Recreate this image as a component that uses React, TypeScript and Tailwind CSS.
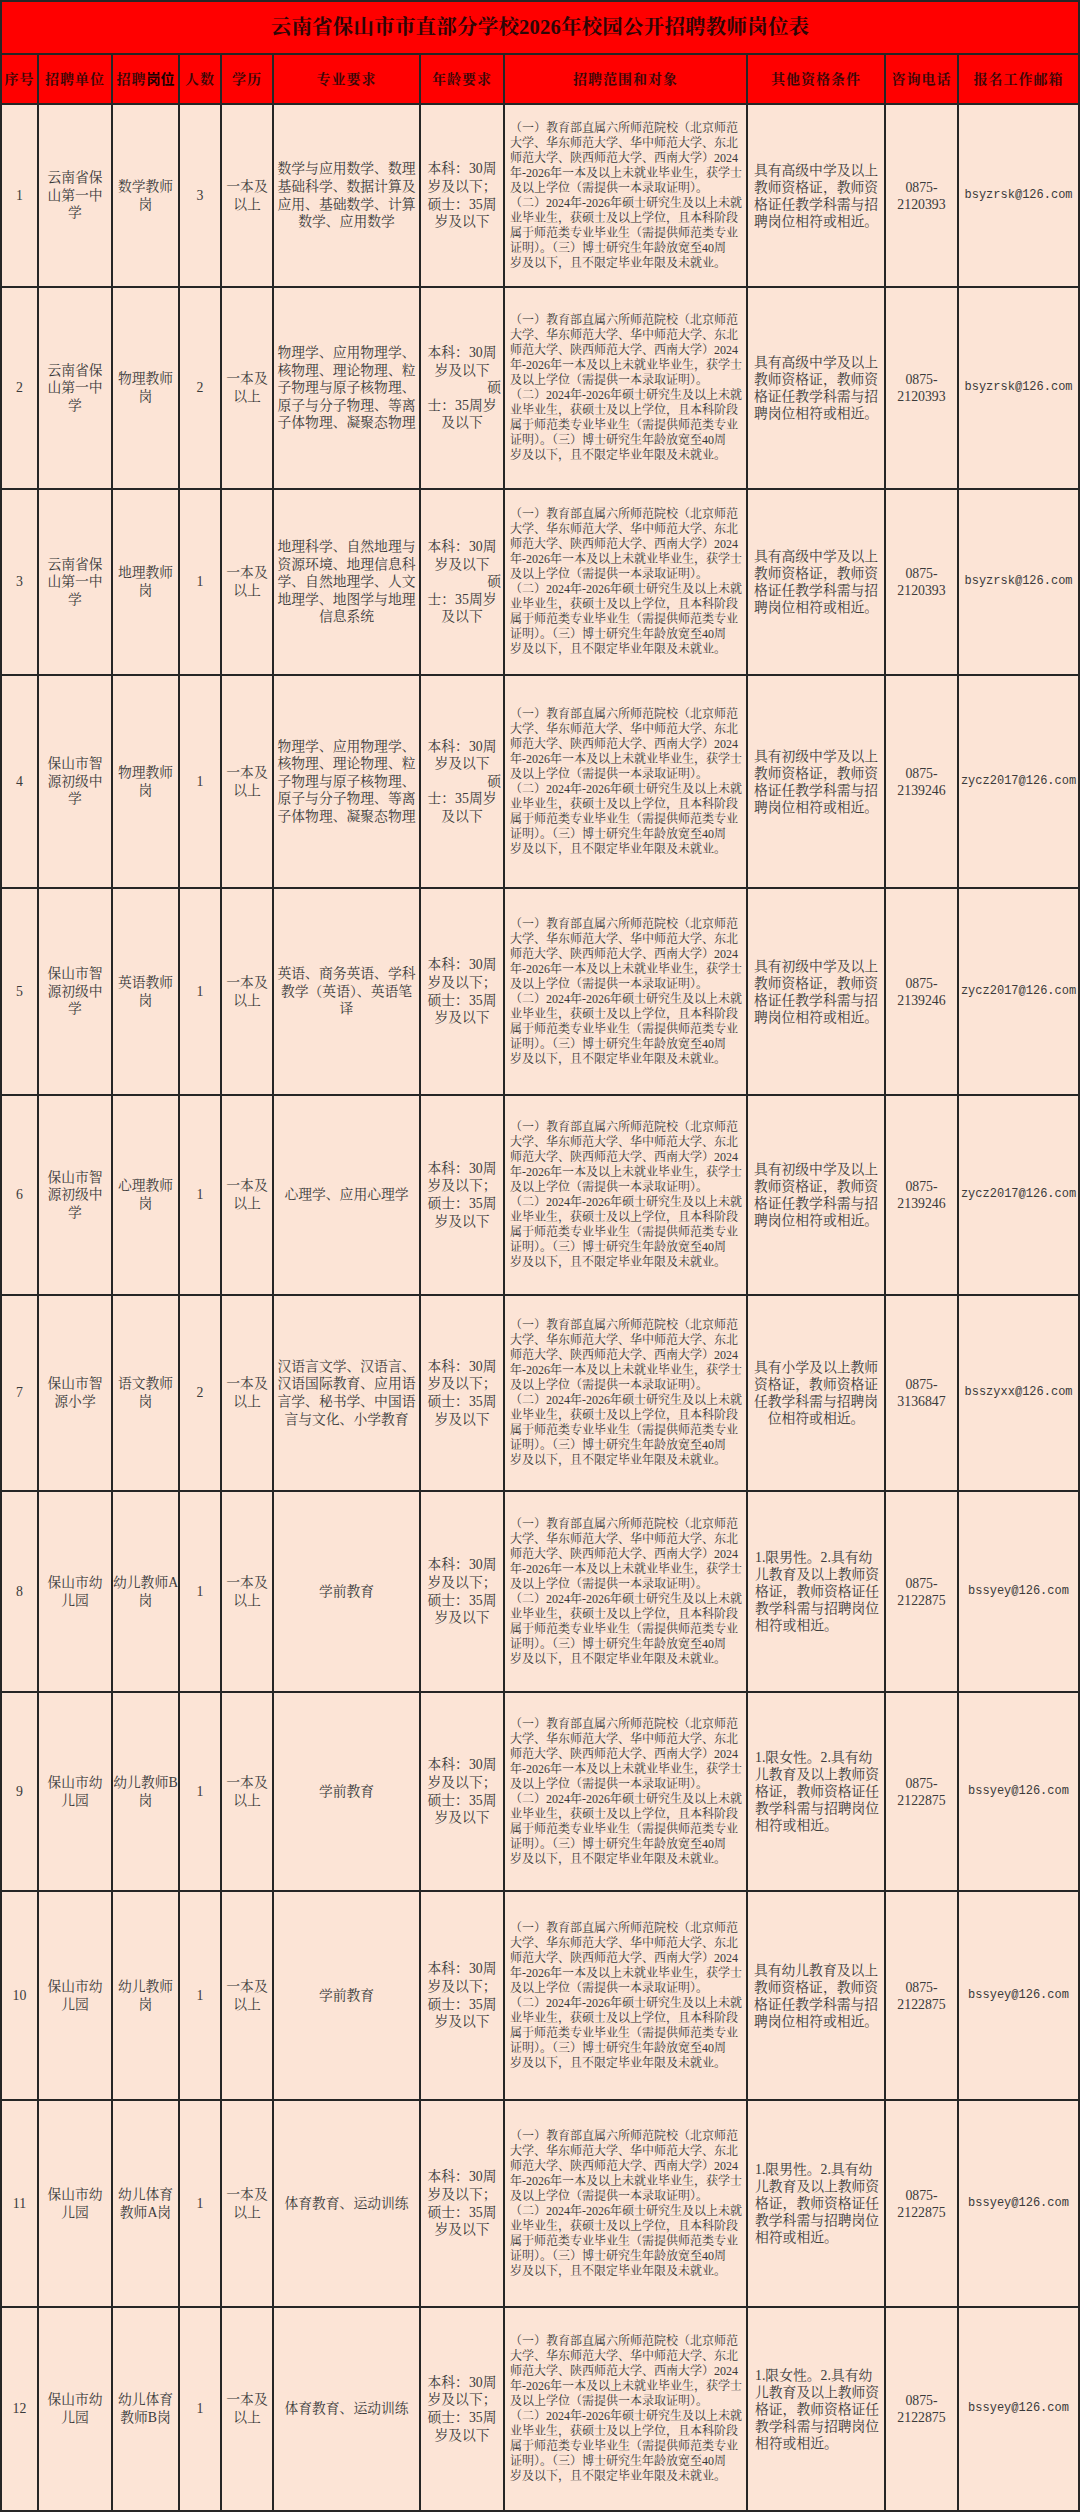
import * as React from "react"
import { clsx as cx } from "clsx"

// 2026 校园招聘岗位表 — 按原表的行高、列宽与换行还原

type Row = {
  no: number
  unit: string[]
  post: string[]
  count: number
  major: string[]
  ageWrap?: boolean
  other: string[]
  otherLeft?: boolean
  phone: string
  email: string
  h: string
}

const SCOPE = [
  "（一）教育部直属六所师范院校（北京师范",
  "大学、华东师范大学、华中师范大学、东北",
  "师范大学、陕西师范大学、西南大学）2024",
  "年-2026年一本及以上未就业毕业生，获学士",
  "及以上学位（需提供一本录取证明）。",
  "（二）2024年-2026年硕士研究生及以上未就",
  "业毕业生，获硕士及以上学位，且本科阶段",
  "属于师范类专业毕业生（需提供师范类专业",
  "证明）。（三）博士研究生年龄放宽至40周",
  "岁及以下，且不限定毕业年限及未就业。",
]

const PHYSICS = [
  "物理学、应用物理学、",
  "核物理、理论物理、粒",
  "子物理与原子核物理、",
  "原子与分子物理、等离",
  "子体物理、凝聚态物理",
]

const SENIOR = ["具有高级中学及以上", "教师资格证，教师资", "格证任教学科需与招", "聘岗位相符或相近。"]
const JUNIOR = ["具有初级中学及以上", "教师资格证，教师资", "格证任教学科需与招", "聘岗位相符或相近。"]
const MALE = ["1.限男性。2.具有幼", "儿教育及以上教师资", "格证，教师资格证任", "教学科需与招聘岗位", "相符或相近。"]
const FEMALE = ["1.限女性。2.具有幼", "儿教育及以上教师资", "格证，教师资格证任", "教学科需与招聘岗位", "相符或相近。"]

const ROWS: Row[] = [
  { no: 1, unit: ["云南省保", "山第一中", "学"], post: ["数学教师", "岗"], count: 3, major: ["数学与应用数学、数理", "基础科学、数据计算及", "应用、基础数学、计算", "数学、应用数学"], other: SENIOR, phone: "2120393", email: "bsyzrsk@126.com", h: "h-[183px]" },
  { no: 2, unit: ["云南省保", "山第一中", "学"], post: ["物理教师", "岗"], count: 2, major: PHYSICS, ageWrap: true, other: SENIOR, phone: "2120393", email: "bsyzrsk@126.com", h: "h-[202px]" },
  { no: 3, unit: ["云南省保", "山第一中", "学"], post: ["地理教师", "岗"], count: 1, major: ["地理科学、自然地理与", "资源环境、地理信息科", "学、自然地理学、人文", "地理学、地图学与地理", "信息系统"], ageWrap: true, other: SENIOR, phone: "2120393", email: "bsyzrsk@126.com", h: "h-[186px]" },
  { no: 4, unit: ["保山市智", "源初级中", "学"], post: ["物理教师", "岗"], count: 1, major: PHYSICS, ageWrap: true, other: JUNIOR, phone: "2139246", email: "zycz2017@126.com", h: "h-[213px]" },
  { no: 5, unit: ["保山市智", "源初级中", "学"], post: ["英语教师", "岗"], count: 1, major: ["英语、商务英语、学科", "教学（英语）、英语笔", "译"], other: JUNIOR, phone: "2139246", email: "zycz2017@126.com", h: "h-[207px]" },
  { no: 6, unit: ["保山市智", "源初级中", "学"], post: ["心理教师", "岗"], count: 1, major: ["心理学、应用心理学"], other: JUNIOR, phone: "2139246", email: "zycz2017@126.com", h: "h-[200px]" },
  { no: 7, unit: ["保山市智", "源小学"], post: ["语文教师", "岗"], count: 2, major: ["汉语言文学、汉语言、", "汉语国际教育、应用语", "言学、秘书学、中国语", "言与文化、小学教育"], other: ["具有小学及以上教师", "资格证，教师资格证", "任教学科需与招聘岗", "位相符或相近。"], phone: "3136847", email: "bsszyxx@126.com", h: "h-[196px]" },
  { no: 8, unit: ["保山市幼", "儿园"], post: ["幼儿教师A", "岗"], count: 1, major: ["学前教育"], other: MALE, otherLeft: true, phone: "2122875", email: "bssyey@126.com", h: "h-[201px]" },
  { no: 9, unit: ["保山市幼", "儿园"], post: ["幼儿教师B", "岗"], count: 1, major: ["学前教育"], other: FEMALE, otherLeft: true, phone: "2122875", email: "bssyey@126.com", h: "h-[199px]" },
  { no: 10, unit: ["保山市幼", "儿园"], post: ["幼儿教师", "岗"], count: 1, major: ["学前教育"], other: ["具有幼儿教育及以上", "教师资格证，教师资", "格证任教学科需与招", "聘岗位相符或相近。"], phone: "2122875", email: "bssyey@126.com", h: "h-[209px]" },
  { no: 11, unit: ["保山市幼", "儿园"], post: ["幼儿体育", "教师A岗"], count: 1, major: ["体育教育、运动训练"], other: MALE, otherLeft: true, phone: "2122875", email: "bssyey@126.com", h: "h-[207px]" },
  { no: 12, unit: ["保山市幼", "儿园"], post: ["幼儿体育", "教师B岗"], count: 1, major: ["体育教育、运动训练"], other: FEMALE, otherLeft: true, phone: "2122875", email: "bssyey@126.com", h: "h-[204px]" },
]

const HEADERS = ["序号", "招聘单位", "招聘岗位", "人数", "学历", "专业要求", "年龄要求", "招聘范围和对象", "其他资格条件", "咨询电话", "报名工作邮箱"]

const COLS = ["w-[37px]", "w-[74px]", "w-[67px]", "w-[42px]", "w-[52px]", "w-[147px]", "w-[84px]", "w-[243px]", "w-[138px]", "w-[73px]", "w-[121px]"]

const cell = "border-2 border-[#262626] align-middle text-center p-0"

function Lines({ lines, className }: { lines: string[]; className?: string }) {
  return (
    <>
      {lines.map((l, i) => (
        <div key={i} className={cx("whitespace-nowrap", className)}>
          {l}
        </div>
      ))}
    </>
  )
}

function Age({ wrap }: { wrap?: boolean }) {
  if (wrap) {
    // 原表此处折行错位："硕"被挤到单独一行并靠右
    return (
      <div className="leading-[17.6px]">
        <div className="whitespace-nowrap">本科：30周</div>
        <div className="whitespace-nowrap">岁及以下</div>
        <div className="whitespace-nowrap pr-[2px] text-right">硕</div>
        <div className="whitespace-nowrap">士：35周岁</div>
        <div className="whitespace-nowrap">及以下</div>
      </div>
    )
  }
  return (
    <div className="leading-[17.6px]">
      <Lines lines={["本科：30周", "岁及以下；", "硕士：35周", "岁及以下"]} />
    </div>
  )
}

export default function App() {
  return (
    <div className="min-h-[2512px] w-[1080px] bg-white font-['Liberation_Serif','Noto_Serif_CJK_SC','Noto_Sans_CJK_SC',serif] text-[#3a3a3a]">
      <table className="w-[1078px] table-fixed border-collapse">
        <colgroup>
          {COLS.map((c) => (
            <col key={c} className={c} />
          ))}
        </colgroup>
        <thead>
          <tr className="h-[53px] bg-[#ff0000]">
            <th colSpan={11} className={cx(cell, "text-[20.5px] font-bold tracking-[0.2px] text-[#2e0606]")}>
              云南省保山市市直部分学校2026年校园公开招聘教师岗位表
            </th>
          </tr>
          <tr className="h-[50px] bg-[#ff0000] text-[14px] font-semibold text-[#3a0808]">
            {HEADERS.map((h) => (
              <th key={h} className={cx(cell, "tracking-[1px] whitespace-nowrap")}>
                {h === "招聘岗位" ? (
                  <>
                    招聘<span className="font-['Noto_Sans_CJK_SC',sans-serif] font-bold tracking-normal text-[#1a0000]">岗位</span>
                  </>
                ) : (
                  h
                )}
              </th>
            ))}
          </tr>
        </thead>
        <tbody className="bg-[#fce4d6] text-[13.8px] leading-[17.6px]">
          {ROWS.map((r) => (
            <tr key={r.no} className={r.h}>
              <td className={cell}>{r.no}</td>
              <td className={cell}>
                <Lines lines={r.unit} />
              </td>
              <td className={cell}>
                <Lines lines={r.post} />
              </td>
              <td className={cell}>{r.count}</td>
              <td className={cell}>
                <Lines lines={["一本及", "以上"]} />
              </td>
              <td className={cell}>
                <Lines lines={r.major} />
              </td>
              <td className={cell}>
                <Age wrap={r.ageWrap} />
              </td>
              <td className={cx(cell, "pl-[5px] pr-[2px] text-left text-[12px] leading-[15px]")}>
                <Lines lines={SCOPE} />
              </td>
              <td className={cx(cell, "leading-[17px]", r.otherLeft ? "pl-[7px] text-left" : "text-center")}>
                <Lines lines={r.other} />
              </td>
              <td className={cx(cell, "leading-[17px]")}>
                <Lines lines={["0875-", r.phone]} />
              </td>
              <td className={cx(cell, "font-['Liberation_Mono',monospace] text-[12px]")}>{r.email}</td>
            </tr>
          ))}
        </tbody>
      </table>
    </div>
  )
}
